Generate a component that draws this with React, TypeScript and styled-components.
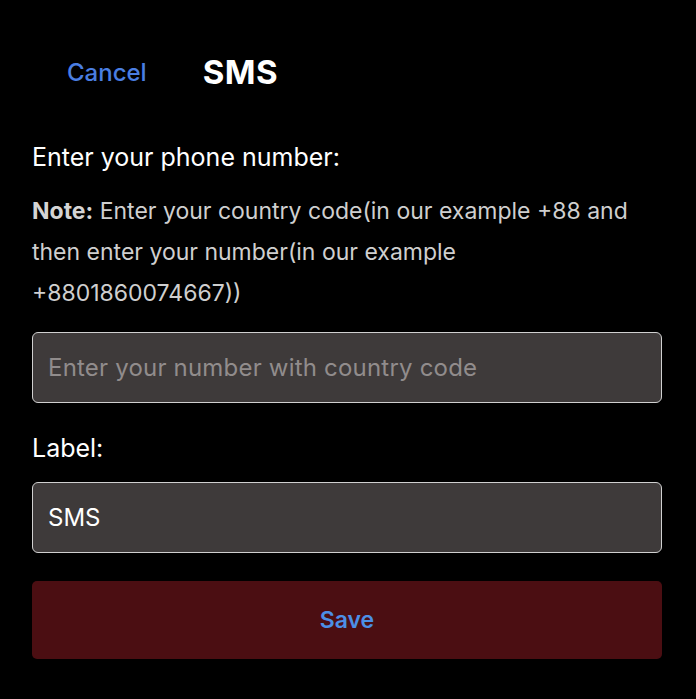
import React from "react";
import styled, { createGlobalStyle } from "styled-components";

const Global = createGlobalStyle`
  html, body {
    margin: 0;
    padding: 0;
    background: #000;
  }
  body {
    font-family: Inter, "Noto Sans", "Liberation Sans", sans-serif;
    color: #fff;
  }
  * { box-sizing: border-box; }
`;

const Page = styled.div`
  width: 696px;
  height: 699px;
  background: #000;
  padding: 0 34px 0 32px;
  display: flex;
  flex-direction: column;
`;

const Header = styled.div`
  display: flex;
  align-items: center;
  gap: 56px;
  height: 72px;
  margin-top: 36px;
  padding-left: 35px;
`;

const CancelButton = styled.button`
  background: none;
  border: none;
  padding: 0;
  font-family: inherit;
  font-size: 24px;
  font-weight: 500;
  color: #4a7ee2;
  cursor: pointer;
`;

const Title = styled.h1`
  margin: 0;
  font-size: 33px;
  font-weight: 700;
  color: #fff;
  letter-spacing: 0.5px;
`;

const Form = styled.div`
  display: flex;
  flex-direction: column;
  margin-top: 32px;
`;

const FieldLabel = styled.label`
  font-size: 25px;
  font-weight: 400;
  color: #fff;
  line-height: 34px;
`;

const Note = styled.p`
  margin: 17px 0 0;
  font-size: 23px;
  line-height: 41px;
  color: #cfcfcf;
  strong { font-weight: 700; color: #d4d4d4; }
`;

const Input = styled.input<{ $gap: number }>`
  margin-top: ${(p) => p.$gap}px;
  height: 71px;
  width: 100%;
  background: #3e3a3a;
  border: 1px solid #d0d0d0;
  border-radius: 6px;
  padding: 0 15px;
  font-family: inherit;
  font-size: 24px;
  color: #fff;
  outline: none;
  &::placeholder { color: #918c8c; letter-spacing: 0.2px; }
`;

const LabelRow = styled.div`
  margin-top: 28px;
  display: flex;
`;

const SaveButton = styled.button`
  margin-top: 28px;
  height: 78px;
  width: 100%;
  background: #4b0e12;
  border: none;
  border-radius: 5px;
  font-family: inherit;
  font-size: 23px;
  font-weight: 600;
  color: #4c8fe6;
  cursor: pointer;
`;

export default function App() {
  return (
    <>
      <Global />
      <Page>
        <Header>
          <CancelButton>Cancel</CancelButton>
          <Title>SMS</Title>
        </Header>
        <Form>
          <FieldLabel>Enter your phone number:</FieldLabel>
          <Note>
            <strong>Note:</strong> Enter your country code(in our example +88 and then enter your number(in our example +8801860074667))
          </Note>
          <Input $gap={18} placeholder="Enter your number with country code" />
          <LabelRow>
            <FieldLabel>Label:</FieldLabel>
          </LabelRow>
          <Input $gap={17} defaultValue="SMS" />
          <SaveButton>Save</SaveButton>
        </Form>
      </Page>
    </>
  );
}
